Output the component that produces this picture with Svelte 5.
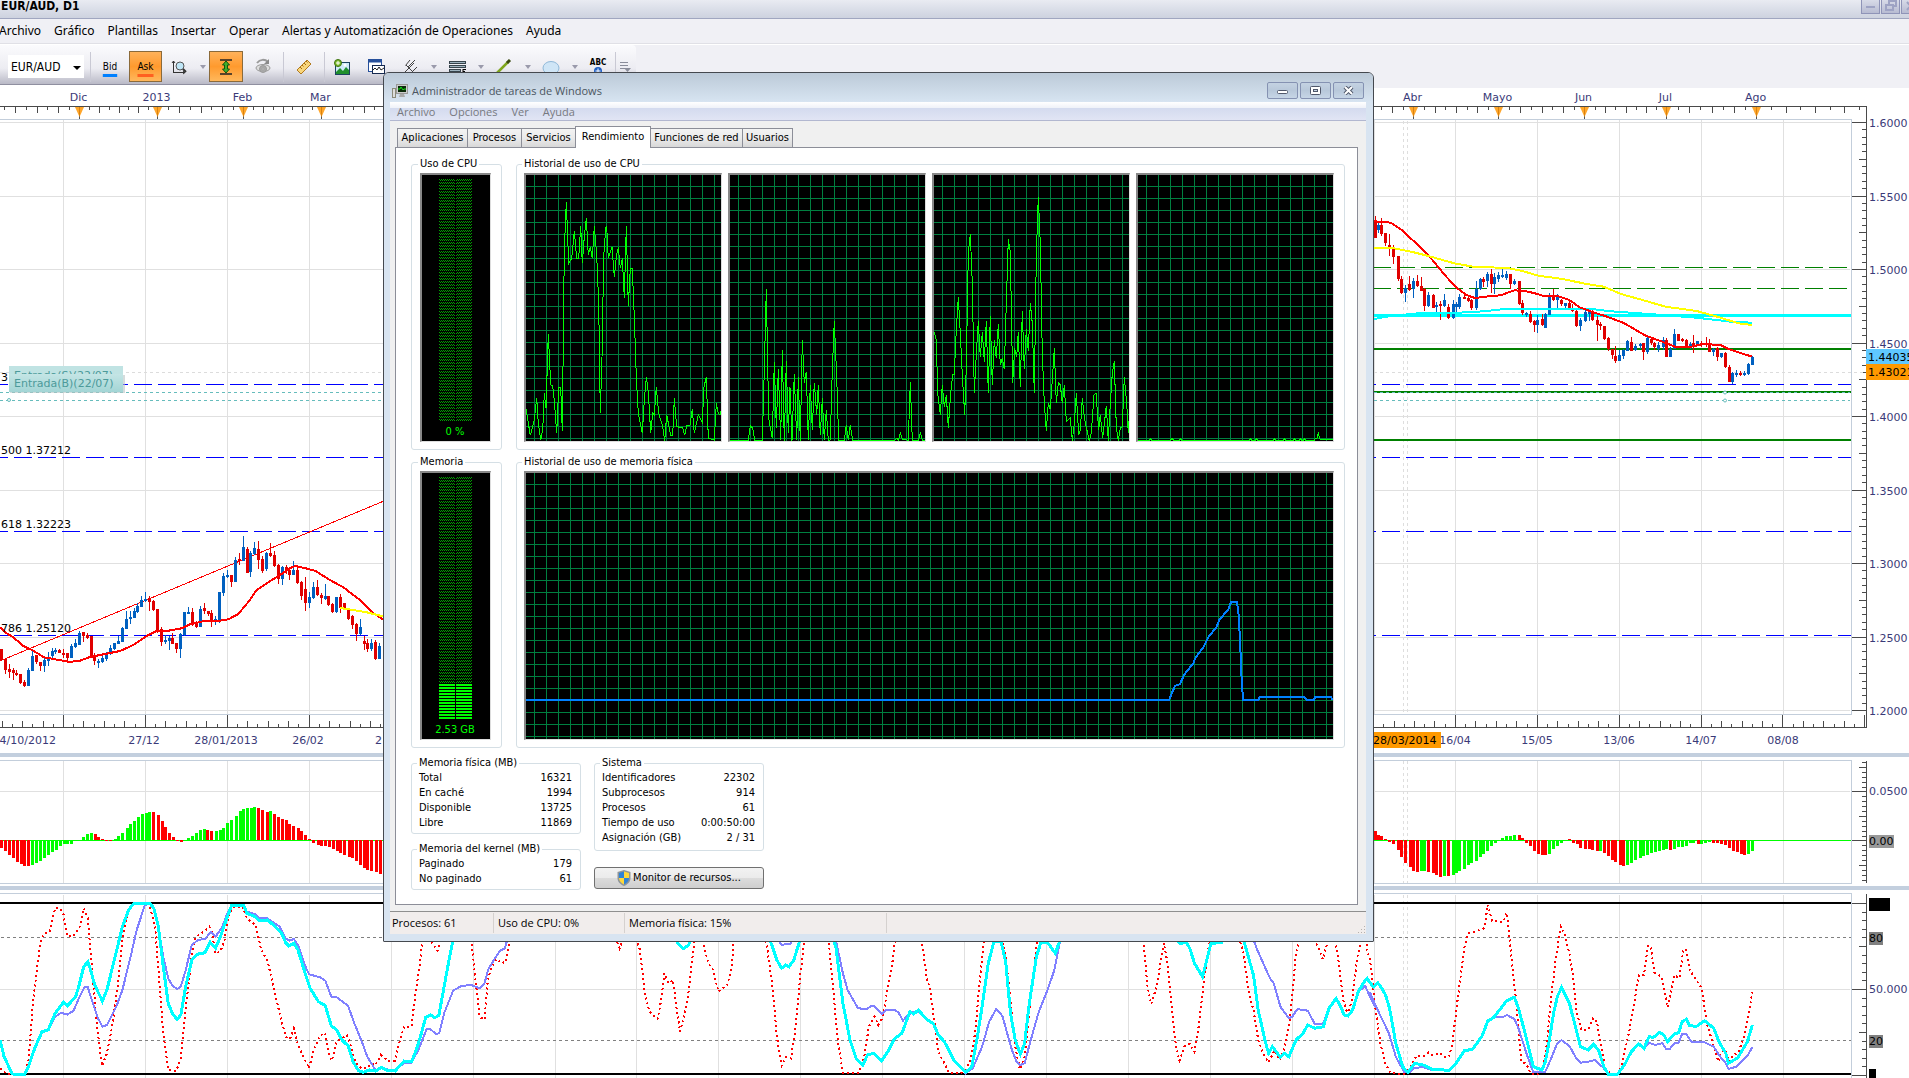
<script>
  // Series are kept as "x,y x,y" strings in sampled units; plot() maps them to pane coordinates.
  const plot = (raw, x0, y0, sx, sy) =>
    raw.trim().split(/\s+/).map((p) => {
      const [x, y] = p.split(',').map(Number);
      return `${(x0 + x / sx).toFixed(1)},${(y0 + y / sy).toFixed(1)}`;
    }).join(' ');

  // Candle: x,bodyTop,bodyBottom,high,low,colour
  const candles = (raw, x0, y0, sx, sy) =>
    raw.trim().split(';').map((c) => {
      const [x, a, b, h, l, k] = c.trim().split(',');
      const cx = Math.round(x0 + x / sx);
      const top = Math.round(y0 + a / sy);
      return {
        x: cx - 1,
        wick: cx,
        top,
        body: Math.max(2, Math.round(y0 + b / sy) - top),
        high: Math.round(y0 + h / sy),
        range: Math.round((l - h) / sy),
        up: k === 'b'
      };
    });

  // Histogram bar: x,end,colour (relative to the zero line)
  const bars = (raw, x0, zero, sx, sy) =>
    raw.trim().split(';').map((c) => {
      const m = c.trim().match(/^(\d+),(\d+)([rg])$/);
      const h = Math.round((m[2] - zero) / sy);
      return { x: Math.round(x0 + m[1] / sx) - 1, y: h < 0 ? 840 + h : 840, h: Math.max(1, Math.abs(h)), up: m[3] === 'g' };
    });

  const pastCandles = candles(`4,897,930,897,934,r;16,928,960,928,972,r;28,957,966,941,984,r;38,961,968,955,992,r;49,968,974,961,978,r;61,972,998,972,1002,r;73,995,1008,990,1011,r;85,960,1008,955,1008,b;97,918,962,898,964,b;109,915,937,915,943,r;121,935,948,935,962,r;133,930,948,920,966,b;145,928,934,905,948,b;156,902,918,893,922,b;166,899,905,895,912,b;178,899,909,897,910,r;190,908,912,897,925,r;202,908,925,908,932,r;214,887,924,882,924,b;226,879,891,866,893,b;238,850,885,843,886,b;250,847,859,845,875,r;262,855,864,850,868,r;272,858,918,858,924,r;283,915,934,910,947,r;295,934,940,928,954,b;307,923,936,914,937,b;319,912,928,905,932,b;331,893,912,885,915,b;343,880,897,878,898,b;355,872,881,857,882,b;367,834,875,830,876,b;379,807,837,783,837,b;390,800,808,783,822,b;401,783,804,775,806,b;412,768,785,760,790,b;424,750,771,738,772,b;436,746,752,726,755,b;448,744,755,738,783,r;460,752,780,750,782,r;472,777,845,777,848,r;484,838,876,830,886,r;496,870,874,855,882,b;507,864,873,858,900,b;517,864,882,850,884,r;529,880,897,878,909,r;541,852,897,850,924,b;553,787,855,785,856,b;565,785,790,770,792,b;577,786,825,773,826,r;589,816,830,812,832,r;601,777,830,768,832,b;613,774,783,759,792,r;623,784,791,782,798,r;634,789,816,780,832,r;646,807,816,797,824,b;658,727,816,726,818,b;670,678,730,668,738,b;682,674,680,660,684,b;694,675,696,675,710,r;706,630,696,621,696,b;718,628,633,610,645,r;730,592,633,558,633,b;740,597,668,592,668,r;751,609,665,603,681,b;763,594,612,575,614,b;775,597,630,572,657,r;787,627,662,618,668,r;799,609,657,606,663,b;811,610,618,579,622,r;823,615,648,604,651,r;835,645,687,642,702,r;847,651,687,648,705,b;857,651,664,645,672,r;868,660,675,654,690,r;880,660,675,633,676,b;892,660,699,650,700,r;904,696,738,694,752,r;916,717,759,681,782,r;928,741,760,726,774,b;940,711,744,696,746,b;952,712,735,690,738,r;964,735,744,729,762,r;974,738,748,702,751,b;985,738,765,738,768,r;997,762,786,760,790,r;1009,741,787,740,788,b;1021,741,774,732,790,r;1033,759,776,758,777,r;1045,780,807,776,810,r;1057,797,825,794,835,r;1069,823,852,820,873,r;1081,831,852,807,854,b;1091,873,882,858,900,r;1102,880,897,868,906,r;1114,878,897,867,903,b;1126,876,927,870,930,r;1138,888,927,880,928,b`, 0, 350, 3, 3);
  const recentCandles = candles(`14,660,713,648,713,r;22,675,690,670,700,b;33,675,702,654,708,r;45,700,728,700,740,r;56,735,742,702,768,r;68,740,772,735,792,r;80,768,838,768,843,r;91,836,879,828,882,r;103,865,880,855,906,b;114,852,870,828,873,r;126,843,868,833,894,b;138,843,858,825,862,r;147,858,872,832,873,r;158,867,918,865,935,r;170,884,918,876,922,b;182,884,924,882,925,r;193,915,922,906,936,b;205,912,918,904,960,r;216,900,918,882,922,b;228,921,954,912,957,r;240,912,954,900,957,b;250,912,921,906,936,b;260,891,921,882,927,b;272,890,894,884,896,r;284,894,903,886,906,r;295,900,924,898,932,r;307,867,924,843,930,b;319,837,867,834,870,b;330,838,845,830,860,r;341,822,843,816,861,b;353,822,852,808,880,r;362,831,852,820,882,b;373,825,838,816,846,b;385,825,828,806,834,b;397,822,834,812,838,b;408,822,852,822,867,r;420,843,853,837,855,b;432,843,912,842,915,r;443,908,940,900,945,r;455,940,945,935,950,b;466,942,966,933,968,r;476,964,975,960,997,r;487,960,975,945,999,b;499,958,975,942,978,r;510,942,983,940,984,b;522,889,945,880,946,b;533,886,900,867,903,r;545,891,900,882,924,b;557,900,913,897,918,r;568,909,918,908,924,b;580,908,924,900,925,r;589,924,934,912,936,r;600,933,978,930,981,r;612,960,978,954,993,b;624,937,963,924,966,b;636,935,939,930,962,b;647,933,960,930,963,r;659,960,975,948,1022,r;670,972,976,966,990,r;682,978,1018,978,1019,r;693,1014,1048,1010,1053,r;705,1047,1065,1046,1075,r;714,1068,1083,1038,1089,r;725,1066,1083,1050,1084,b;737,1050,1068,1047,1077,b;749,1023,1053,1020,1054,b;760,1026,1053,1012,1054,r;772,1038,1050,1032,1053,b;784,1032,1037,1030,1047,b;795,1030,1056,1028,1080,r;807,1014,1056,1008,1062,b;818,1017,1030,1010,1035,r;827,1030,1040,1026,1050,r;839,1035,1048,1025,1056,b;851,1020,1040,1012,1050,b;862,1020,1070,1014,1071,r;874,1047,1070,1042,1071,b;885,1002,1046,987,1047,b;897,1002,1022,1002,1024,r;909,1018,1022,1014,1027,r;920,1020,1038,1018,1041,r;930,1032,1038,1026,1048,b;941,1030,1034,1006,1059,r;952,1024,1036,1022,1038,b;964,1028,1032,1022,1040,r;976,1028,1036,1010,1041,r;987,1034,1055,1017,1056,r;999,1047,1056,1044,1068,b;1010,1044,1072,1042,1083,r;1022,1059,1072,1058,1074,b;1034,1059,1102,1056,1104,r;1043,1102,1146,1096,1148,r;1054,1119,1146,1116,1152,b;1066,1119,1122,1110,1130,b;1077,1119,1124,1114,1128,r;1089,1120,1124,1114,1128,b;1101,1092,1122,1088,1124,b;1112,1070,1094,1068,1095,b`, 1370, 0, 2.909, 3);
  const allCandles = [...pastCandles, ...recentCandles];

  const redPast = plot('0,832 20,850 40,862 70,888 100,902 132,922 165,928 205,935 235,934 270,921 300,915 360,903 400,885 440,858 470,843 500,843 545,835 570,823 610,814 660,812 685,808 715,792 745,756 770,720 800,700 840,675 870,655 885,648 910,653 945,662 990,690 1030,712 1080,750 1120,790 1160,815', 0, 350, 3, 3);
  const yellowPast = plot('1021,774 1060,780 1100,787 1160,802', 0, 350, 3, 3);
  const redNow = plot('0,663 40,666 60,668 90,688 115,712 150,745 180,778 215,822 250,862 280,885 305,894 345,889 380,886 420,871 450,873 480,880 505,888 545,888 580,900 610,922 650,937 690,950 740,970 800,1006 850,1025 890,1041 930,1041 970,1032 1020,1035 1045,1048 1075,1058 1112,1070', 1370, 0, 2.909, 3);
  const yellowNow = plot('0,745 60,743 120,755 170,768 245,790 300,800 400,804 440,812 490,827 560,837 630,852 680,860 730,882 800,902 860,920 950,933 1010,950 1060,966 1085,973 1112,974', 1370, 0, 2.909, 3);
  const cyanNow = plot('0,960 40,951 80,946 150,939 240,939 330,934 400,926 500,928 640,926 700,934 800,941 950,953 1050,965 1112,968', 1370, 0, 2.909, 3);

  const histogram = [
    ...bars('3,326r;13,335r;22,347r;32,356r;41,366r;51,374r;60,378r;69,378r;79,375g;89,369g;99,363g;108,354g;118,345g;127,338g;137,331g;146,320g;156,314g;165,312g;175,312g;184,305g;194,303g;204,291g;213,283g;223,279g;232,283r;241,291r;251,297r;260,301r;270,302r;281,298g;290,288g;300,279g;310,264g;319,253g;328,243g;337,231g;347,222g;357,219g;366,216g;376,216r;386,226r;396,243r;405,262r;414,279r;424,291r;433,305r;443,308r;452,304g;460,295g;470,290g;480,281g;490,270g;499,267g;508,270r;518,273r;528,273g;538,270g;547,264g;557,251g;567,240g;577,229g;587,213g;596,207g;605,204g;614,204g;623,201g;633,204r;643,211r;653,216r;662,213g;672,222r;681,231r;690,237r;700,240r;709,252r;719,258r;729,264r;738,273r;748,285r;757,297r;768,309r;778,315r;787,320r;796,320r;805,321r;815,328r;825,334r;834,339r;844,345r;854,351r;863,356r;873,364r;882,375r;891,384r;900,392r;910,395r;920,398r;930,402r', 0, 301, 2.45, 3),
    ...bars('14,213r;23,225r;33,228r;45,237r;56,246r;68,254r;80,270r;91,291r;103,309r;115,321r;126,333r;138,336r;147,333g;158,333g;170,336r;182,339r;193,345r;205,351r;216,348g;228,348r;240,345g;250,339g;260,333g;272,327g;284,315g;295,309g;307,303g;319,291g;330,282g;341,273g;353,258g;364,249g;375,243g;385,234g;397,229g;408,229g;420,225g;432,225r;443,236r;455,249r;466,258r;478,273r;489,282r;499,285r;510,285r;522,282g;533,267g;545,258g;557,249g;568,243g;580,238r;590,249r;601,254r;612,264r;624,267r;636,269r;647,270r;659,275r;670,275g;682,279r;693,288r;704,300r;714,306r;726,315r;737,318r;749,315g;760,309g;772,300g;784,294g;795,288g;807,285g;818,279g;828,276g;840,275g;851,270g;862,267g;874,270r;885,267g;897,261g;909,261g;920,258g;931,251g;941,251g;953,252r;964,252g;975,249g;987,246g;999,249r;1010,249r;1022,252r;1034,255r;1045,264r;1055,273r;1067,276r;1078,282r;1089,285r;1101,282g;1112,273g', 1370, 241, 2.909, 3)
  ];

  const A = [0, 740, 2.45, 3];
  const B = [640, 900, 2.119, 3];
  const C = [1370, 760, 2.909, 3];
  const fastRed = [
    plot('0,985 15,1000 30,1003 60,1003 70,960 80,800 90,690 100,600 110,580 122,575 135,505 147,505 155,520 165,590 180,588 195,560 205,505 215,535 225,680 238,860 250,978 262,940 275,860 290,720 300,600 315,510 330,490 365,490 380,560 390,720 400,880 412,990 432,993 443,955 452,840 462,730 470,640 480,590 500,575 513,560 520,580 527,640 540,635 550,600 560,530 570,500 595,500 605,535 627,556 640,630 655,660 670,740 685,820 700,890 710,898 720,865 730,915 745,955 757,985 770,925 785,885 797,880 805,940 813,962 825,905 850,885 860,920 870,965 885,985 900,985 910,970 920,975 933,945 950,962 968,962 980,900 990,860 1008,860 1018,760 1030,660 1035,590 1060,610 1072,632 1080,600 1090,560 1120,500 1150,560 1160,660 1165,720 1175,830 1187,840 1195,720 1205,680 1217,657 1228,670 1240,665 1248,600 1270,500 1490,490 1510,600 1518,625 1530,580 1560,600', ...A),
    plot('0,150 10,280 20,335 37,357 45,300 52,220 60,250 70,240 78,330 85,395 100,310 108,210 115,125 125,90 135,135 145,190 155,210 166,275 185,255 195,200 198,125 210,70 250,60 268,130 280,250 290,410 300,497 310,470 320,475 330,380 340,220 348,125 370,60 400,125 410,280 420,430 430,520 463,520 475,470 485,380 497,350 505,375 515,350 525,260 533,210 540,128 560,80 590,80 598,130 607,230 615,270 625,380 632,455 645,490 655,520 680,520 690,510 700,480 710,400 720,240 730,110 745,60 765,100 775,170 785,300 795,440 805,508 815,470 825,330 835,200 842,120 870,60 1000,50 1060,70 1068,140 1075,255 1083,312 1095,260 1105,170 1110,130 1118,190 1125,300 1135,430 1143,482 1155,435 1165,432 1175,455 1185,370 1195,240 1205,140 1215,80 1260,80 1278,150 1290,280 1300,330 1310,420 1322,465 1332,487 1345,450 1355,480 1365,450 1375,380 1383,270 1390,160 1400,100 1420,100 1435,135 1447,178 1460,110 1472,110 1480,180 1490,300 1500,345 1510,290 1520,170 1530,120 1540,110', ...B),
    plot('-10,570 0,597 15,740 30,850 45,912 60,938 85,942 100,942 120,918 135,888 155,890 170,877 180,885 205,880 215,890 230,890 240,850 250,760 262,660 275,560 285,520 310,513 332,505 343,435 355,483 388,485 398,458 410,580 425,720 440,905 455,912 468,942 490,942 505,915 515,850 525,730 540,600 555,500 565,520 580,580 592,660 600,750 615,810 635,808 650,773 660,785 670,845 685,930 705,942 725,940 738,890 755,810 770,720 782,645 797,645 808,558 817,560 827,638 848,650 865,742 875,700 885,645 900,655 912,568 920,570 930,630 965,685 980,790 1000,860 1013,905 1022,875 1033,870 1045,905 1057,885 1070,880 1085,840 1100,770 1112,697', ...C)
  ].join(' ');
  const mainCyan = [
    plot('0,900 10,950 30,1002 60,1003 68,985 85,925 103,875 118,870 135,820 155,787 165,797 185,772 195,730 205,680 215,665 222,690 232,735 251,783 262,750 280,660 300,560 315,510 328,490 367,490 377,505 388,560 400,680 412,790 423,822 434,838 443,825 455,740 470,660 483,643 502,638 515,607 528,625 540,590 557,530 568,495 597,495 605,520 625,530 635,543 655,540 670,555 690,580 700,608 708,618 720,610 730,630 745,690 760,745 780,785 797,797 812,858 825,870 838,900 853,918 865,965 878,992 890,997 905,990 920,993 935,982 950,992 968,993 990,963 1008,965 1020,930 1030,890 1043,832 1055,825 1065,833 1075,827 1085,760 1100,660 1110,600 1130,500', ...A),
    plot('60,80 80,130 92,146 103,135 115,90 200,60 260,90 278,130 290,180 300,205 308,195 316,200 326,180 338,125 360,70 400,80 415,140 430,310 445,420 458,475 472,495 482,465 495,460 512,482 525,455 540,415 555,400 572,335 580,342 590,330 605,355 622,372 632,405 645,425 665,480 690,517 703,500 715,410 725,320 738,190 750,125 765,125 775,185 785,340 795,420 806,462 815,430 825,310 840,170 850,125 865,130 880,160 890,120 920,60 1100,80 1145,130 1158,128 1165,145 1175,190 1192,230 1200,185 1210,130 1232,128 1250,80 1275,100 1285,150 1300,225 1310,330 1325,425 1332,460 1340,440 1357,472 1365,460 1375,470 1390,420 1405,400 1415,375 1430,385 1448,380 1460,325 1475,295 1485,320 1492,345 1500,348 1510,330 1522,275 1538,238', ...B),
    plot('-8,655 0,668 10,680 22,668 35,685 45,705 57,745 75,850 95,920 110,937 130,910 155,915 180,928 230,931 250,910 275,872 298,868 325,830 343,783 360,772 398,722 420,712 432,745 455,835 475,920 500,930 510,905 520,850 535,755 545,710 557,683 580,730 600,810 612,860 635,870 650,853 665,870 680,920 693,942 720,942 740,915 760,875 782,852 797,865 812,830 825,832 843,817 855,825 865,845 885,822 898,818 908,785 920,778 930,797 950,799 973,782 1000,805 1015,845 1035,880 1043,910 1070,893 1098,845 1112,795', ...C)
  ].join(' ');
  const slowBlue = [
    plot('0,900 10,950 30,1002 60,1003 68,985 85,925 103,875 118,870 135,830 150,818 165,824 180,812 195,770 207,742 215,742 225,780 240,835 251,860 262,855 285,800 300,750 320,650 335,570 355,495 367,492 377,505 388,560 400,650 412,715 423,738 434,747 443,740 455,690 470,615 485,600 502,597 517,575 528,590 545,560 557,520 568,497 597,495 605,515 625,523 635,535 655,535 685,560 700,595 710,602 720,597 730,615 745,670 757,703 785,712 797,722 812,770 825,772 853,798 868,850 885,900 900,950 920,990 935,985 968,993 990,968 1008,968 1025,930 1045,868 1055,868 1068,882 1076,880 1088,820 1110,752 1130,738 1155,735 1175,745 1187,730 1197,685 1225,632 1237,625 1245,590 1260,500', ...A),
    plot('60,60 270,60 290,115 300,134 318,132 330,110 360,60 400,60 415,120 430,220 440,270 462,325 480,327 490,318 497,318 512,342 522,330 540,330 548,338 557,362 565,350 575,338 590,333 605,355 622,372 632,405 645,425 665,480 690,520 705,505 725,440 740,365 755,327 768,348 778,400 788,450 798,485 806,495 815,490 830,410 845,335 865,265 878,210 890,125 920,60 1200,60 1295,100 1308,150 1335,235 1343,250 1357,320 1375,355 1382,350 1393,327 1405,330 1415,332 1430,372 1447,372 1460,325 1475,298 1492,345 1500,348 1510,330 1522,275 1537,258 1545,285 1557,320', ...B),
    plot('0,697 20,745 55,820 75,890 100,937 115,937 130,923 155,922 180,930 230,932 250,910 275,872 298,868 325,830 343,783 365,772 388,770 398,765 420,777 432,805 455,880 475,937 510,935 525,900 545,850 557,840 580,858 600,895 612,908 635,905 655,900 680,925 693,942 720,942 740,915 760,875 782,852 797,865 812,848 830,855 850,850 862,867 872,867 885,850 898,848 908,822 920,822 935,845 973,847 1000,860 1015,885 1035,910 1043,927 1065,920 1098,887 1112,862', ...C)
  ].join(' ');

  const cpu = [
    plot('438,1018 451,1096 463,1050 470,985 475,1060 482,1110 488,1080 493,970 498,1015 505,792 512,945 518,948 523,992 530,1090 536,952 542,952 547,1082 553,540 559,397 566,580 575,565 583,484 590,565 596,565 602,468 607,580 613,500 619,445 625,555 631,532 637,565 643,468 650,555 656,700 661,1028 666,860 671,560 677,475 680,468 685,565 696,532 703,620 709,560 715,532 721,595 727,565 733,683 739,468 745,708 751,595 757,595 763,740 769,920 775,1030 787,1090 793,990 799,922 805,965 812,1090 818,1030 823,1034 829,952 836,1030 848,1070 854,1112 860,1034 872,1096 878,1096 883,985 890,1070 908,1073 914,1096 920,1066 930,1066 937,1018 943,1090 955,1034 967,1057 972,950 979,922 985,1105 1003,1110 1009,1000 1015,1030 1021,1034 1026,1008', -144, -103, 3, 3),
    plot('1048,1111 1105,1111 1111,1068 1118,1075 1124,1111 1147,1111 1153,900 1159,658 1166,1045 1177,1105 1183,875 1189,1073 1195,898 1202,1110 1207,840 1213,1112 1219,873 1225,1090 1230,952 1236,1112 1243,912 1250,1111 1255,922 1261,1112 1267,810 1273,938 1279,906 1285,1110 1291,945 1297,1080 1303,938 1310,1034 1315,945 1321,1096 1327,985 1333,1110 1339,1020 1345,1111 1351,1110 1357,900 1363,753 1370,920 1376,1111 1393,1111 1399,1066 1405,1111 1411,1066 1418,1111 1545,1111 1550,1105 1555,1111 1561,1088 1567,1108 1585,1111 1591,937 1597,1111 1615,1111 1621,1088 1627,1111 1640,1111', -348, -103, 3, 3),
    plot('163,786 169,810 173,970 181,1034 187,945 193,1010 199,975 205,1073 212,970 218,912 223,912 229,780 235,682 241,790 247,915 254,1034 259,890 265,550 271,492 277,640 283,970 289,852 295,753 301,860 307,786 313,875 319,753 325,970 331,738 337,945 343,810 349,865 355,762 361,885 367,865 373,898 379,700 385,507 391,545 398,938 404,835 410,860 415,786 421,952 427,723 433,898 439,778 445,842 451,700 457,760 463,970 469,560 475,381 481,520 487,850 493,1000 499,1082 505,1000 511,1018 517,930 523,835 529,1000 535,938 541,945 547,1000 553,945 559,1055 571,1043 577,1112 583,1060 589,970 596,1096 601,1080 607,985 614,1050 628,1112 634,1090 642,975 648,970 656,1080 661,1034 668,1105 679,1008 685,1112 691,1000 697,910 703,873 709,1070 715,1112 721,1073 727,1070 733,922 740,1000 745,1090 749,1018', -52, -103, 3, 3),
    plot('772,1111 808,1111 812,1106 816,1111 870,1111 876,1106 881,1111 898,1111 902,1106 906,1111 1108,1111 1112,1106 1116,1111 1126,1111 1130,1106 1134,1111 1180,1111 1184,1106 1188,1111 1210,1111 1214,1106 1218,1111 1240,1111 1244,1106 1248,1111 1258,1111 1262,1106 1266,1111 1270,1111 1274,1106 1278,1111 1303,1111 1306,1106 1311,1105 1315,1090 1321,1109 1364,1110', -256, -103, 3, 3)
  ];
  const memory = plot('-1062,779 868,779 875,760 885,738 900,732 912,705 940,670 947,652 970,622 985,592 1010,560 1018,540 1045,508 1053,487 1070,487 1075,510 1080,600 1085,720 1089,779 1135,779 1139,771 1273,771 1280,779 1302,779 1306,771 1352,771 1357,778 1363,779', 356, -31, 3, 3);

  const gridX = [63.5, 145.5, 227.5, 309.5, 391.5, 473.5, 555.5, 636.5, 718.5, 800.5, 882.5, 964.5, 1046.5, 1128.5, 1210.5, 1292.5, 1374.5, 1455.5, 1537.5, 1619.5, 1701.5, 1783.5];
  const prices = ['1.6000', '1.5500', '1.5000', '1.4500', '1.4000', '1.3500', '1.3000', '1.2500', '1.2000'].map((label, i) => ({ label, y: Math.round(122 + i * 73.5) + 0.5 }));
  const priceTicks = Array.from({ length: 81 }, (_, i) => ({ y: Math.round(122 + i * 7.35) + 0.5, x: i % 10 === 0 ? 1852 : i % 5 === 0 ? 1859 : 1862 }));
  const dateTicks = Array.from({ length: 183 }, (_, i) => i - 6).map((i) => ({ x: Math.round(63 + i * 10.235) + 0.5, y: i % 8 === 0 ? 715 : i % 2 === 0 ? 721 : 724 })).filter((t) => t.x < 1866);
  const months = [['Dic', 79.5], ['2013', 157.5], ['Feb', 243.5], ['Mar', 321.5], ['Abr', 1413.5], ['Mayo', 1498.5], ['Jun', 1584.5], ['Jul', 1666.5], ['Ago', 1756.5]];
  const monthEdges = [-6.5, 79.5, 157.5, 243.5, 321.5, 405.5, 1327.5, 1413.5, 1498.5, 1584.5, 1666.5, 1756.5, 1873.5];
  const monthTicks = monthEdges.slice(0, -1).flatMap((a, i) => {
    const b = monthEdges[i + 1];
    if (b - a > 200) return [];
    return Array.from({ length: 8 }, (_, k) => ({ x: Math.round(a + ((b - a) * k) / 8) + 0.5, y: k % 2 ? 110 : 113 }));
  }).filter((t) => t.x < 1866);
  const dates = [['27/12', 144], ['28/01/2013', 226], ['26/02', 308], ['16/04', 1455], ['15/05', 1537], ['13/06', 1619], ['14/07', 1701], ['08/08', 1783]];
  const fibs = [['500 1.37212', 457], ['618 1.32223', 531], ['786 1.25120', 635]];
  const oscTicks = Array.from({ length: 25 }, (_, i) => ({ y: Math.round(762 + i * 4.9) + 0.5, x: i === 6 || i === 16 ? 1852 : i === 1 || i === 11 || i === 21 ? 1859 : 1862 }));
  const stoTicks = Array.from({ length: 21 }, (_, i) => ({ y: Math.round(903 + i * 8.6) + 0.5, x: i % 10 === 0 ? 1852 : i % 5 === 0 ? 1859 : 1862 }));

  const menus = ['Archivo', 'Gráfico', 'Plantillas', 'Insertar', 'Operar', 'Alertas y Automatización de Operaciones', 'Ayuda'];
  const tmMenus = ['Archivo', 'Opciones', 'Ver', 'Ayuda'];
  const tabs = [['Aplicaciones', 't70'], ['Procesos', 't54'], ['Servicios', 't54'], ['Rendimiento', 't74'], ['Funciones de red', 't92'], ['Usuarios', 't50']];
  const physical = [['Total', '16321'], ['En caché', '1994'], ['Disponible', '13725'], ['Libre', '11869']];
  const kernel = [['Paginado', '179'], ['No paginado', '61']];
  const system = [['Identificadores', '22302'], ['Subprocesos', '914'], ['Procesos', '61'], ['Tiempo de uso', '0:00:50:00'], ['Asignación (GB)', '2 / 31']];

  let active = $state('Rendimiento');
</script>

{#snippet table(rows)}
  <table>
    <tbody>
      {#each rows as [k, v]}
        <tr><th scope="row">{k}</th><td>{v}</td></tr>
      {/each}
    </tbody>
  </table>
{/snippet}

{#snippet meter(label, lit)}
  <svg class="meter" viewBox="2 2 68 266" role="img" aria-label={label}>
    <rect width="70" height="269" fill="#000" />
    <g fill="url(#dim)">
      <rect x="19" y="6" width="16" height={242 - lit} />
      <rect x="36" y="6" width="16" height={242 - lit} />
    </g>
    {#if lit}
      <g fill="url(#lit)">
        <rect x="19" y={249 - lit} width="16" height={lit} />
        <rect x="36" y={249 - lit} width="16" height={lit} />
      </g>
    {/if}
    <text x="35" y="262" text-anchor="middle" class="reading">{label}</text>
  </svg>
{/snippet}

{#snippet caret()}
  <button class="caret" aria-label="Más opciones"><svg width="6" height="4" viewBox="0 0 6 4"><path d="M0 0H6L3 4Z" fill="#9a9aab" /></svg></button>
{/snippet}

<svg class="defs" width="0" height="0" aria-hidden="true">
  <defs>
    <pattern id="dim" x="1" width="2" height="3" patternUnits="userSpaceOnUse"><path d="M0 0h1v1h-1zM1 1h1v1h-1z" fill="#00a000" /></pattern>
    <pattern id="lit" x="0" width="60" height="3" patternUnits="userSpaceOnUse"><path d="M0 0h60v2h-60z" fill="#00ff00" /></pattern>
    <pattern id="mesh" x="10" y="1" width="12" height="12" patternUnits="userSpaceOnUse"><path d="M0 0h1v12h-1zM0 0h12v1h-12z" fill="#008040" /></pattern>
    <linearGradient id="tag" x1="0" y1="0" x2="0" y2="1"><stop offset="0" stop-color="#c4e5e5" /><stop offset="1" stop-color="#a3d5d5" /></linearGradient>
  </defs>
</svg>

<div class="desk">
  <header class="title">
    <h1>EUR/AUD, D1</h1>
    <div class="controls">
      <button aria-label="Minimizar"><svg width="18" height="14" viewBox="0 0 18 14"><path d="M4 7h9" stroke="#9ea3c4" stroke-width="2" /></svg></button>
      <button aria-label="Restaurar"><svg width="18" height="14" viewBox="0 0 18 14" fill="none" stroke="#9ea3c4" stroke-width="2"><path d="M7 4V1h7v5h-2M4 5h7v5H4z" /></svg></button>
      <button aria-label="Cerrar"><svg width="18" height="14" viewBox="0 0 18 14"><path d="M5 2l7 8M12 2l-7 8" stroke="#9ea3c4" stroke-width="2" /></svg></button>
    </div>
  </header>

  <nav class="menu">
    {#each menus as m}<button>{m}</button>{/each}
  </nav>

  <div class="toolstrip">
    <div class="toolbar">
      <span class="combo">
        <select aria-label="Instrumento"><option>EUR/AUD</option></select>
        <svg width="8" height="4" viewBox="0 0 8 4"><path d="M0 0H8L4 4Z" fill="#000" /></svg>
      </span>
      <i class="sep"></i>
      <button class="price bid">Bid</button>
      <button class="price ask on">Ask</button>
      <button class="tool" aria-label="Zoom">
        <svg width="16" height="16" viewBox="0 0 16 16" fill="none"><path d="M2.500 2V14M1 4l1.500-2L4 4M2 13.500H14M12 12l2 1.500-2 1.500" stroke="#333" /><circle cx="9" cy="7" r="4" fill="#bfe6f7" stroke="#555" /><path d="M12 10l3 3" stroke="#333" stroke-width="2" /></svg>
      </button>
      {@render caret()}
      <button class="tool on" aria-label="Ajustar vertical">
        <svg width="14" height="16" viewBox="0 0 14 16"><path d="M1 1h12M1 15h12" stroke="#222" stroke-width="1.500" /><path d="M7 2l3.500 4H8.500v4h2L7 14l-3.500-4h2V6h-2z" fill="#3fae2a" stroke="#14560c" /></svg>
      </button>
      <button class="tool wide" aria-label="Actualizar">
        <svg width="16" height="18" viewBox="0 0 16 18" fill="none" stroke="#9a9a9a"><path d="M2 5C5 1 10 1 13 4" stroke-width="2" /><path d="M14 1v5H9z" fill="#8a8a8a" stroke="none" /><ellipse cx="8" cy="10" rx="7" ry="3.500" fill="#ddd" /><circle cx="8" cy="11" r="3.500" fill="#aaa" /><circle cx="8" cy="11" r="1" fill="#fff" /></svg>
      </button>
      <i class="sep"></i>
      <button class="tool wide" aria-label="Medir">
        <svg width="16" height="16" viewBox="0 0 16 16"><path d="M1 11L11 1l4 4L5 15z" fill="#f8d67c" stroke="#b27a1e" /><path d="M4 8l2 2M6 6l1.500 1.500M8 4l2 2M10 2l1.500 1.500" stroke="#a46b12" /></svg>
      </button>
      <i class="sep"></i>
      <button class="tool" aria-label="Insertar imagen">
        <svg width="16" height="16" viewBox="0 0 16 16"><rect x="1.500" y="3.500" width="14" height="12" fill="#cfeaf8" stroke="#1c4360" /><path d="M2 13l4-4 3 3 3-4 3 3v4H2z" fill="#1f8f2c" /><circle cx="11" cy="6" r="1.500" fill="#fff" /><circle cx="4" cy="4" r="3.500" fill="#7dbb2e" stroke="#3c7210" /><path d="M4 2v4M2 4h4" stroke="#fff" /></svg>
      </button>
      <button class="tool" aria-label="Indicadores">
        <svg width="17" height="17" viewBox="0 0 17 17" fill="#fff" stroke="#27509b"><rect x=".5" y="1.500" width="13" height="12" /><path d="M1 3h12" stroke-width="3" /><rect x="4.500" y="7.500" width="12" height="8" stroke="#16294f" /><path d="M5 12l2-2 2 2 2-3 2 3 3-2" fill="none" stroke="#222" /></svg>
      </button>
      <button class="tool" aria-label="Tridente">
        <svg width="16" height="16" viewBox="0 0 16 16" fill="none" stroke="#444"><path d="M1 15L12 4M4 6l6 6M8 1L3.500 6.500M15 8l-5 5M6 8l7-7" /></svg>
      </button>
      {@render caret()}
      <button class="tool" aria-label="Líneas">
        <svg width="17" height="14" viewBox="0 0 17 14" fill="#9eb3bf" stroke="#37444c"><rect x=".5" y="1.500" width="16" height="2" /><rect x=".5" y="5.500" width="16" height="2" /><rect x=".5" y="9.500" width="11" height="2" /><path d="M14 9v5M14 9.500h3M14 11.500h2" stroke="#000" /></svg>
      </button>
      {@render caret()}
      <button class="tool" aria-label="Dibujar línea">
        <svg width="16" height="16" viewBox="0 0 16 16"><path d="M1 14L12 3" stroke="#7fa61e" stroke-width="2.500" /><path d="M11 4l3-3" stroke="#3a4a10" stroke-width="3" /></svg>
      </button>
      {@render caret()}
      <button class="tool" aria-label="Elipse">
        <svg width="18" height="16" viewBox="0 0 18 16"><ellipse cx="9" cy="9" rx="8" ry="6.500" fill="#cfe5f6" stroke="#8fb8d8" /></svg>
      </button>
      {@render caret()}
      <button class="tool abc" aria-label="Texto"><span>ABC</span><svg width="8" height="8" viewBox="0 0 8 8"><circle cx="4" cy="4" r="4" fill="#1f5fc4" /><path d="M4 1.500v5M1.500 4h5" stroke="#fff" /></svg></button>
      <i class="sep"></i>
      <button class="tool more" aria-label="Más herramientas">
        <svg width="11" height="12" viewBox="0 0 11 12" stroke="#8a8d9a"><path d="M0 1.500h8M0 4.500h8M0 7.500h8" /><path d="M4 7h7l-3.500 4z" fill="#8a8d9a" stroke="none" /></svg>
      </button>
    </div>
  </div>

  <main>
    <svg class="pane" viewBox="0 88 1909 665" role="img" aria-label="Gráfico de precios EUR/AUD">
      <g class="grid">
        {#each gridX as x}<path d="M{x} 119V714" />{/each}
        {#each prices as p}<path d="M0 {p.y}H1850" />{/each}
      </g>
      <path class="cross" d="M1403.500 121V712M1407.500 121V712" />
      <path class="frame" d="M0 119.500H1851.500V714.500H0" />
      <g class="axis">
        <path d="M0 106.500H1866.500V727.500H0" />
        {#each monthTicks as t}<path d="M{t.x} 107V{t.y}" />{/each}
        {#each dateTicks as t}<path d="M{t.x} {t.y}V727" />{/each}
        {#each priceTicks as t}<path d="M{t.x} {t.y}H1866" />{/each}
      </g>
      {#each months as [m, x]}
        <path d="M{x} 112V119" stroke="#555" />
        <path d="M{x - 4.5} 107h9l-4.500 10z" fill="#ffa62b" />
        <path d="M{x} 107V116" stroke="#d98310" />
        <text x={x - 1} y="101" text-anchor="middle" class="label">{m}</text>
      {/each}
      {#each prices as p}<text x="1869" y={p.y + 4.5} class="label">{p.label}</text>{/each}
      {#each dates as [d, x]}<text {x} y="744" text-anchor="middle" class="label">{d}</text>{/each}
      <text x="56" y="744" text-anchor="end" class="label">4/10/2012</text>
      <text x="375" y="744" class="label">2</text>

      <path d="M0 372.500H1866" class="thin" stroke="#dcdcdc" stroke-dasharray="3 3" />
      <g class="thin" stroke="#0000ff" stroke-dasharray="18 6">
        <path d="M-10 384.500H1851M-10 457.500H1851M-10 531.500H1851M-10 635.500H1851" />
      </g>
      <path d="M1373 267.500H1850M1373 288.500H1850" class="thin" stroke="#008000" stroke-dasharray="18 6" />
      <path d="M1370 349H1851M1370 392H1851M1370 440H1851" class="thin" stroke="#008000" stroke-width="2" />
      <path d="M0 392.500H1850M0 400.500H1850" class="thin" stroke="#66bcbc" stroke-dasharray="3 3" />
      <path d="M1370 315.500H1851" class="thin" stroke="#00ffff" stroke-width="3" />
      <path d="M0 661L390 498.500" class="thin" stroke="#ff0000" />
      <g fill="#fff" stroke="#66bcbc"><circle cx="9" cy="400" r="1.500" /><circle cx="1725" cy="392.500" r="1.500" /><circle cx="1725" cy="400.500" r="1.500" /></g>

      <g class="thin">
        {#each allCandles as c}
          <g fill={c.up ? '#0060c0' : '#e00000'}>
            <rect x={c.wick} y={c.high} width="1" height={c.range} />
            <rect x={c.x} y={c.top} width="3" height={c.body} />
          </g>
        {/each}
      </g>
      <g class="thin" fill="none" stroke-width="2">
        <polyline points={cyanNow} stroke="#00ffff" />
        <polyline points={redPast} stroke="#ff0000" />
        <polyline points={redNow} stroke="#ff0000" />
        <polyline points={yellowPast} stroke="#ffff00" />
        <polyline points={yellowNow} stroke="#ffff00" />
      </g>

      {#each fibs as [f, y]}<text x="1" y={y - 3} class="label dark">{f}</text>{/each}
      <text x="1" y="381" class="label dark">3</text>
      <rect x="9" y="366" width="114" height="18" fill="#c0e3e3" />
      <text x="14" y="379" class="label teal">Entrada(S)(22/07)</text>
      <rect x="10" y="375" width="115" height="18" fill="#b9c4c4" opacity=".6" />
      <rect x="9" y="374" width="114" height="18" fill="url(#tag)" />
      <text x="14" y="387" class="label teal">Entrada(B)(22/07)</text>

      <rect x="1866" y="349" width="43" height="15" fill="#5fc8ff" />
      <text x="1868" y="361" class="label dark">1.44035</text>
      <rect x="1866" y="364" width="43" height="16" fill="#ff9900" />
      <text x="1868" y="376" class="label dark">1.43021</text>
      <rect x="1366" y="732" width="75" height="16" fill="#ff9900" />
      <text x="1373" y="744" class="label dark">28/03/2014</text>
    </svg>

    <div class="divider"></div>

    <svg class="pane" viewBox="0 757 1909 129" role="img" aria-label="Oscilador">
      <g class="grid">
        {#each gridX as x}<path d="M{x} 761V883" />{/each}
        <path d="M0 791.500H1850" />
      </g>
      <path class="cross" d="M1403.500 761V883M1407.500 761V883" />
      <path class="frame" d="M0 760.500H1851.500V883.500H0" />
      <g class="axis">
        <path d="M1866.500 761V883" />
        {#each oscTicks as t}<path d="M{t.x} {t.y}H1866" />{/each}
      </g>
      <g class="thin">
        <rect x="0" y="840" width="1851" height="1" fill="#00ff00" />
        {#each histogram as b}<rect x={b.x} y={b.y} width="3" height={b.h} fill={b.up ? '#00ff00' : '#ff0000'} />{/each}
      </g>
      <text x="1869" y="795" class="label">0.0500</text>
      <rect x="1869" y="835" width="25" height="13" fill="#999" />
      <text x="1869" y="845" class="label dark">0.00</text>
    </svg>

    <div class="divider"></div>

    <svg class="pane" viewBox="0 890 1909 188" role="img" aria-label="Estocástico">
      <g class="grid">
        {#each gridX as x}<path d="M{x} 895V1078" />{/each}
        <path d="M0 989.500H1850" />
      </g>
      <path class="cross" d="M1403.500 895V1078M1407.500 895V1078" />
      <path class="frame" d="M0 893.500H1851.500V1080" />
      <g class="axis">
        <path d="M1866.500 894V1078" />
        {#each stoTicks as t}<path d="M{t.x} {t.y}H1866" />{/each}
      </g>
      <path d="M0 903H1851M0 1074H1851" class="thin" stroke="#000" stroke-width="2" />
      <path d="M1 937.500H1851M1 1040.500H1851" class="thin" stroke="#808080" stroke-dasharray="3 3" />
      <g class="thin" fill="none">
        <polyline points={fastRed} stroke="#ff0000" stroke-width="2" stroke-dasharray="2 3" />
        <polyline points={slowBlue} stroke="#8080ff" stroke-width="2" />
        <polyline points={mainCyan} stroke="#00ffff" stroke-width="3" />
      </g>
      <rect x="1869" y="898" width="21" height="13" fill="#000" />
      <rect x="1869" y="932" width="14" height="13" fill="#808080" />
      <text x="1869" y="942" class="label dark">80</text>
      <text x="1869" y="993" class="label">50.000</text>
      <rect x="1869" y="1035" width="14" height="13" fill="#808080" />
      <text x="1869" y="1045" class="label dark">20</text>
      <rect x="1869" y="1069" width="7" height="9" fill="#000" />
    </svg>
  </main>

  <section class="window" aria-label="Administrador de tareas de Windows">
    <div class="caption">
      <svg width="16" height="15" viewBox="0 0 16 15"><rect x=".5" y="4.500" width="3" height="9" fill="#ddd" stroke="#8b8b7a" /><rect x="4.500" y=".5" width="11" height="9" fill="#ccc" stroke="#999" /><rect x="6" y="2" width="8" height="6" fill="#0a2a0a" /><path d="M6 5h2l1-2 2 3 1-1h2" fill="none" stroke="#14e014" /><path d="M7 13h6l-1-3h-4z" fill="#aaa" /></svg>
      <h2>Administrador de tareas de Windows</h2>
      <div class="winbtns">
        <button aria-label="Minimizar"><svg width="12" height="9" viewBox="0 0 12 9"><rect x=".5" y="4.500" width="10" height="3" rx="1" fill="#fff" stroke="#50586b" /></svg></button>
        <button aria-label="Maximizar"><svg width="12" height="9" viewBox="0 0 12 9"><rect x=".5" y=".5" width="10" height="8" rx="1" fill="#fff" stroke="#50586b" /><rect x="3.500" y="3.500" width="4" height="2" fill="#c5d3e2" stroke="#50586b" /></svg></button>
        <button aria-label="Cerrar"><svg width="12" height="9" viewBox="0 0 12 9"><path d="M2 1l7 7M9 1L2 8" stroke="#50586b" stroke-width="4" /><path d="M2 1l7 7M9 1L2 8" stroke="#fff" stroke-width="2" /></svg></button>
      </div>
    </div>
    <div class="client">
      <nav class="tmmenu">{#each tmMenus as m}<button>{m}</button>{/each}</nav>
      <div class="tabs" role="tablist">
        {#each tabs as [t, w]}
          <button role="tab" class={w} class:sel={active === t} aria-selected={active === t} onclick={() => (active = t)}>{t}</button>
        {/each}
      </div>
      <div class="panel">
        <div class="row">
          <fieldset class="gauge"><legend>Uso de CPU</legend>{@render meter('0 %', 0)}</fieldset>
          <fieldset class="hist">
            <legend>Historial de uso de CPU</legend>
            <div class="graphs">
              {#each cpu as c, i}
                <svg class="graph" viewBox="2 2 195 266" preserveAspectRatio="xMinYMin slice" role="img" aria-label="CPU {i}">
                  <rect width="200" height="270" fill="#000" />
                  <rect width="200" height="270" fill="url(#mesh)" />
                  <polyline points={c} fill="none" stroke="#00ff00" />
                </svg>
              {/each}
            </div>
          </fieldset>
        </div>
        <div class="row">
          <fieldset class="gauge"><legend>Memoria</legend>{@render meter('2.53 GB', 36)}</fieldset>
          <fieldset class="hist">
            <legend>Historial de uso de memoria física</legend>
            <div class="graphs">
              <svg class="graph" viewBox="2 2 807 266" preserveAspectRatio="xMinYMin slice" role="img" aria-label="Memoria física">
                <rect width="814" height="270" fill="#000" />
                <rect width="814" height="270" fill="url(#mesh)" />
                <polyline points={memory} fill="none" stroke="#0080ff" stroke-width="2" />
              </svg>
            </div>
          </fieldset>
        </div>
        <div class="stats">
          <div class="col">
            <fieldset><legend>Memoria física (MB)</legend>{@render table(physical)}</fieldset>
            <fieldset><legend>Memoria del kernel (MB)</legend>{@render table(kernel)}</fieldset>
          </div>
          <div class="col">
            <fieldset class="sys"><legend>Sistema</legend>{@render table(system)}</fieldset>
            <button class="monitor">
              <svg width="14" height="16" viewBox="0 0 14 16"><path d="M7 0l6.500 2v6c0 4-3 6.500-6.500 8C3.500 14.500.5 12 .5 8V2z" fill="#8f9599" /><path d="M7 1.500V8H2V3z" fill="#2f83d6" /><path d="M7 1.500V8h5V3z" fill="#ffd83a" /><path d="M2 8h5v6.500C4 13 2 11 2 8z" fill="#ffd83a" /><path d="M12 8H7v6.500c3-1.500 5-3.500 5-6.500z" fill="#2f83d6" /></svg>
              <span>Monitor de recursos...</span>
            </button>
          </div>
        </div>
      </div>
      <footer class="status">
        <span class="s1">Procesos: 61</span>
        <span class="s2">Uso de CPU: 0%</span>
        <span class="s3">Memoria física: 15%</span>
        <svg width="9" height="9" viewBox="0 0 9 9" fill="#b5b0ad"><path d="M7 1h1v1h-1zM7 4h1v1h-1zM4 4h1v1h-1zM7 7h1v1h-1zM4 7h1v1h-1zM1 7h1v1h-1z" /></svg>
      </footer>
    </div>
  </section>
</div>

<style>
  :global(body) { margin: 0; background: #fff; }
  :global(*) { box-sizing: border-box; }
  .defs { position: absolute; }
  .desk { position: relative; overflow: hidden; min-height: 100vh; background: #fff; font: 11px/14px 'DejaVu Sans Condensed', 'DejaVu Sans', sans-serif; color: #000; }
  button, select { font: inherit; color: inherit; border: 0; padding: 0; margin: 0; background: none; }
  h1, h2 { margin: 0; font-size: inherit; }
  svg { display: block; }

  .title { display: flex; justify-content: space-between; height: 19px; overflow: hidden; background: linear-gradient(#e9ebf2, #cdd2df); border-bottom: 1px solid #a0a6c0; }
  .title h1 { font: bold 12px/12px 'DejaVu Sans Condensed', 'DejaVu Sans', sans-serif; padding-left: 1px; }
  .controls { display: flex; gap: 1px; margin-right: -11px; }
  .controls button { width: 19px; height: 14px; background: linear-gradient(#d8dbe8, #b7bbd2); border: 1px solid #8f94b8; border-top: 0; display: grid; place-items: center; }

  .menu { display: flex; gap: 13px; height: 25px; margin-left: -1px; background: #f0f0f5; border-bottom: 1px solid #e0e0e6; font: 12px/24px 'Noto Sans', sans-serif; }
  .toolstrip { height: 44px; background: #f0f0f5; border-top: 1px solid #fff; }
  .toolbar { display: flex; align-items: center; width: 636px; height: 40px; padding: 6px 0 2px 8px; background: linear-gradient(#fbfbfd, #ececf2 60%, #b9b9c6); border-bottom: 1px solid #8f8fa0; border-radius: 0 4px 4px 0; box-shadow: 0 4px #fff; }
  .combo { position: relative; width: 76px; height: 23px; background: #fff; flex: none; }
  .combo select { width: 100%; height: 23px; padding-left: 3px; appearance: none; outline: 0; font-size: 12px; }
  .combo svg { position: absolute; right: 3px; top: 11px; pointer-events: none; }
  .sep { flex: none; width: 1px; height: 30px; background: #c9c9d4; }
  .combo + .sep { margin-left: 6px; }
  .price { width: 38px; height: 31px; font-size: 10px; line-height: 12px; flex: none; }
  .bid { text-decoration: underline #0080ff 3px; text-underline-offset: 4px; }
  .ask { width: 33px; text-decoration: underline #ff6020 3px; text-underline-offset: 4px; }
  .on { background: linear-gradient(#ffb25a, #ff9a2e 50%, #ffb85c); border: 1px solid #8b6a3a; }
  .tool { flex: none; width: 34px; height: 31px; display: grid; place-items: center; }
  .tool.wide { width: 40px; }
  .tool.more { width: 18px; }
  .caret { flex: none; width: 13px; height: 31px; display: grid; place-items: center; }
  .abc { grid-template-rows: 9px 9px; align-content: center; font-size: 8px; line-height: 9px; font-weight: bold; justify-items: center; }

  .pane { width: 100%; height: auto; }
  .divider { height: 4px; background: #c3cfde; }
  .grid { stroke: #e0e0e0; shape-rendering: crispEdges; }
  .cross { stroke: #dedede; stroke-dasharray: 3 3; shape-rendering: crispEdges; }
  .frame { fill: none; stroke: #c3cedb; shape-rendering: crispEdges; }
  .axis { fill: none; stroke: #4a4a4a; shape-rendering: crispEdges; }
  .thin { shape-rendering: crispEdges; }
  .label { font: 11px 'DejaVu Sans', sans-serif; fill: #3a3a78; }
  .dark { fill: #000; }
  .teal { fill: #4c9a9a; }

  .window { position: absolute; left: 383px; top: 72px; width: 991px; padding: 0 7px 7px 6px; background: #d8e4f1; border: 1px solid #45494f; border-radius: 6px 6px 1px 1px; overflow: hidden; }
  .caption { display: flex; align-items: flex-end; height: 29px; margin: 0 -7px 0 -6px; padding: 0 9px 3px 8px; background: linear-gradient(#bccad8, #d7e4f1); color: #4b5560; }
  .caption h2 { flex: 1; padding-left: 4px; font: 11px/16px 'Open Sans', sans-serif; }
  .winbtns { display: flex; gap: 2px; }
  .winbtns button { width: 31px; height: 17px; display: grid; place-items: center; border: 1px solid #8592b2; border-radius: 2px; background: linear-gradient(#c4d2e2, #b8c8da 50%, #c6d5e6); }
  .client { background: #f0f0f0; }
  .tmmenu { display: flex; gap: 14px; height: 19px; padding-left: 7px; font: 11px/20px 'Open Sans', sans-serif; color: #77797f; background: linear-gradient(#fff, #eef1f8 35%, #d4dbef 36%, #e1e5f4); border-bottom: 1px solid #b2b7d0; }
  .tabs { display: flex; align-items: flex-end; height: 26px; padding-left: 7px; }
  .tabs button { height: 19px; border: 1px solid #8c8e98; border-bottom: 0; background: linear-gradient(#f3f3f3, #ebebeb 50%, #d8d8d8); white-space: nowrap; margin-right: -1px; }
  .tabs button.sel { position: relative; height: 22px; margin-bottom: -1px; padding-bottom: 2px; background: #fff; }
  .t70 { width: 71px; } .t54 { width: 55px; } .t74 { width: 76px; } .t92 { width: 93px; } .t50 { width: 51px; }
  .panel { margin: 0 8px 0 5px; padding: 9px 12px 14px 15px; background: #fff; border: 1px solid #8c8e98; }
  .row { display: grid; grid-template-columns: 91px minmax(0, 1fr); gap: 14px; margin-bottom: 5px; }
  fieldset { min-width: 0; margin: 0; padding: 0 8px 3px 7px; border: 1px solid #d5dfe5; border-radius: 3px; }
  legend { margin-left: -2px; padding: 0 2px; line-height: 14px; }
  .gauge { padding: 2px 10px 7px 8px; }
  .hist { padding: 2px 10px 7px 7px; }
  .meter, .graph { height: 269px; border: 2px solid #888; border-right: 1px solid #ddd; border-bottom: 1px solid #ddd; }
  .meter { width: 71px; }
  .graph { flex: 1; width: 0; shape-rendering: crispEdges; }
  .graphs { display: flex; gap: 6px; }
  .reading { font: 11px 'DejaVu Sans Condensed', sans-serif; fill: #00ff00; }
  .stats { display: flex; gap: 13px; padding-top: 3px; align-items: flex-start; }
  .col { display: flex; flex-direction: column; gap: 8px; width: 170px; }
  table { width: 100%; border-collapse: collapse; }
  th, td { padding: 0; height: 15px; line-height: 15px; font-weight: normal; text-align: left; white-space: nowrap; }
  td { text-align: right; }
  .sys { padding-bottom: 5px; }
  .monitor { display: flex; align-items: center; justify-content: center; gap: 2px; height: 22px; margin-top: 8px; border: 1px solid #707070; border-radius: 3px; background: linear-gradient(#f2f2f2, #ebebeb 50%, #dcdcdc 51%, #cfcfcf); }
  .status { display: flex; align-items: center; height: 23px; margin-top: 6px; border-top: 1px solid #8f8f8f; background: #f1edec; font: 11px/20px 'Open Sans', sans-serif; }
  .status span { height: 20px; border-right: 1px solid #d5d1cf; padding-left: 4px; }
  .s1 { width: 104px; padding-left: 2px; } .s2 { width: 131px; } .s3 { width: 262px; }
  .status .s1 { padding-left: 2px; }
  .status svg { margin-left: auto; align-self: flex-end; }
</style>
